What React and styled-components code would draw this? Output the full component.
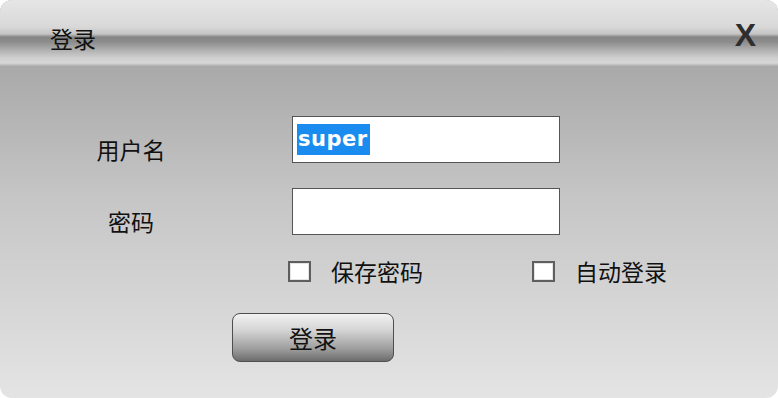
import styled, { createGlobalStyle } from "styled-components";

const GlobalStyle = createGlobalStyle`
  html, body {
    margin: 0;
    padding: 0;
    background: #ffffff;
  }
  body {
    font-family: "Noto Sans CJK SC", "Liberation Sans", sans-serif;
  }
`;

const Window = styled.div`
  width: 778px;
  height: 398px;
  border-radius: 12px;
  overflow: hidden;
  display: flex;
  flex-direction: column;
  background: linear-gradient(to bottom, #a9a9a9 66px, #c6c6c6 200px, #e4e4e4 100%);
`;

const TitleBar = styled.div`
  height: 66px;
  flex: none;
  display: flex;
  align-items: center;
  justify-content: space-between;
  padding: 0 22px 0 50px;
  box-sizing: border-box;
  background: linear-gradient(
    to bottom,
    #e6e6e6 0px,
    #d8d8d8 27px,
    #c4c4c4 34px,
    #868686 37px,
    #8c8c8c 42px,
    #b4b4b4 51px,
    #cfcfcf 58px,
    #d6d6d6 63px,
    #b0b0b0 66px
  );
`;

const Title = styled.span`
  font-size: 23px;
  color: #111;
  margin-top: 10px;
`;

const Close = styled.span`
  font-family: "Liberation Sans", "DejaVu Sans", sans-serif;
  font-size: 32px;
  font-weight: bold;
  color: #2e2e2e;
  margin-top: 4px;
`;

const Body = styled.div`
  display: flex;
  flex-direction: column;
  padding-top: 50px;
`;

const Row = styled.div`
  display: flex;
  align-items: flex-start;
  margin-top: ${(p) => p.$gap || 0}px;
`;

const Label = styled.span`
  width: 140px;
  margin-left: 61px;
  margin-top: 21px;
  text-align: center;
  font-size: 23px;
  line-height: 24px;
  color: #111;
`;

const Field = styled.div`
  width: 268px;
  height: 47px;
  margin-left: 91px;
  box-sizing: border-box;
  border: 1px solid #555;
  background: #ffffff;
  display: flex;
  align-items: center;
  padding-left: 4px;
`;

const Selected = styled.span`
  background: #1a8cf0;
  color: #ffffff;
  font-family: "DejaVu Sans", "Liberation Sans", sans-serif;
  font-weight: bold;
  font-size: 21px;
  line-height: 31px;
  padding: 0 2px 0 1px;
  letter-spacing: 0.5px;
`;

const CheckRow = styled.div`
  display: flex;
  align-items: center;
  margin-top: 24px;
  margin-left: 288px;
`;

const CheckItem = styled.label`
  display: flex;
  align-items: center;
  gap: 20px;
  width: ${(p) => p.$width || "auto"};
  font-size: 23px;
  line-height: 24px;
  color: #111;
`;

const Box = styled.span`
  width: 23px;
  height: 21px;
  box-sizing: border-box;
  border: 2px solid #5e5e5e;
  background: #ffffff;
  box-shadow: inset 0 0 0 1px #e4e4e4;
`;

const Button = styled.button`
  margin-top: 30px;
  margin-left: 232px;
  width: 162px;
  height: 49px;
  border: 1px solid #4e4e4e;
  border-radius: 8px;
  background: linear-gradient(to bottom, #f2f2f2 0%, #d4d4d4 35%, #9c9c9c 75%, #6c6c6c 100%);
  font-family: "Noto Sans CJK SC", sans-serif;
  font-size: 24px;
  color: #111;
  padding: 0;
`;

const App = () => {
  return (
    <>
      <GlobalStyle />
      <Window>
        <TitleBar>
          <Title>登录</Title>
          <Close>X</Close>
        </TitleBar>
        <Body>
          <Row>
            <Label>用户名</Label>
            <Field>
              <Selected>super</Selected>
            </Field>
          </Row>
          <Row $gap={25}>
            <Label>密码</Label>
            <Field />
          </Row>
          <CheckRow>
            <CheckItem $width="244px">
              <Box />
              保存密码
            </CheckItem>
            <CheckItem>
              <Box />
              自动登录
            </CheckItem>
          </CheckRow>
          <Button>登录</Button>
        </Body>
      </Window>
    </>
  );
};

export default App;
